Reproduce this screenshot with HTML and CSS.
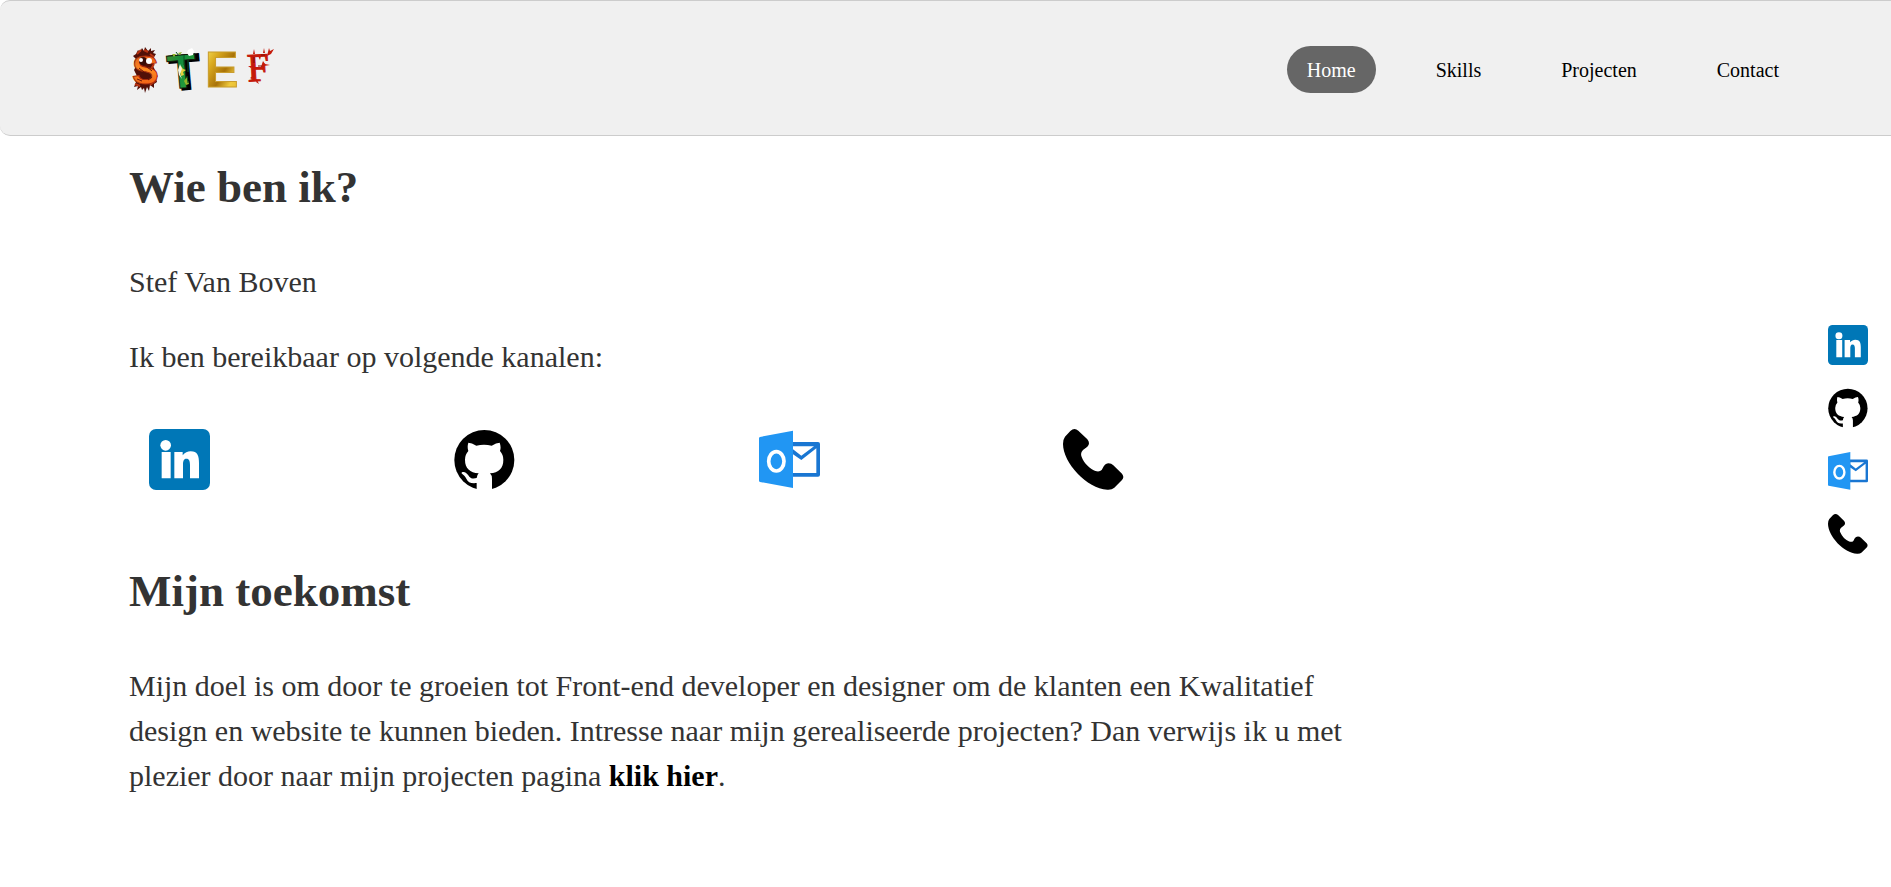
FILE: index.html
```html
<!DOCTYPE html>
<html lang="nl">
<head>
<meta charset="utf-8">
<meta name="viewport" content="width=device-width, initial-scale=1">
<title>Stef Van Boven</title>
<link rel="stylesheet" href="styles.css">
</head>
<body>
<svg class="sprite" aria-hidden="true">
  <symbol id="linkedin" viewBox="0 0 183 183">
    <rect width="183" height="183" rx="21" fill="#0077b7"/>
    <circle cx="50" cy="49" r="16" fill="#fff"/>
    <path fill="#fff" d="M38 69H65V148H38ZM76 69H101V79C107 71 116 67 125 67C146 67 150 81 150 102V148H123V108C123 97 121 89 112 89C104 89 102 97 102 107V148H76Z"/>
  </symbol>
  <symbol id="github" viewBox="0 0 183 183">
    <circle cx="91" cy="93" r="90"/>
    <path fill="#fff" d="M43 41Q53 41 67 50Q90 44 113 50Q127 41 137 41Q142 54 138 66Q148 77 148 92C148 119 134 130 108 133Q114 139 114 149V184H68V162C51 164 42 160 37 149C33 141 29 138 24 134C21 131 24 128 30 129C38 131 42 138 46 143C52 150 61 149 68 147Q69 138 74 133C48 130 33 119 33 92Q33 77 43 66Q39 54 43 41Z"/>
  </symbol>
  <symbol id="outlook" viewBox="0 0 183 183">
    <path fill="#1976d2" d="M98 39H177Q183 39 183 45V137Q183 143 177 143H98Z"/>
    <path fill="#fff" d="M102 52H165L127 80L102 61ZM102 76L127 93L172 58V132H102Z"/>
    <path fill="#2196f3" d="M3 24L102 5V177L3 159Q0 158 0 155V27Q0 25 3 24Z"/>
    <ellipse cx="52" cy="97" rx="23" ry="29" fill="none" stroke="#fff" stroke-width="11"/>
  </symbol>
  <symbol id="phone" viewBox="0 0 183 183">
    <path d="M22 6Q34 -5 46 5L73 31Q83 43 73 53L60 63Q51 71 56 84C64 104 80 119 97 126Q109 130 116 123C121 116 124 103 137 103Q145 103 151 109L177 134Q185 144 177 153L154 176Q146 183 133 182C72 180 0 101 0 45Q0 31 6 23Z"/>
  </symbol>
</svg>

<header class="header">
  <a class="logo" href="#home" aria-label="STEF">
    <svg class="logo-art" viewBox="0 0 144 48" aria-hidden="true">
      <defs>
        <linearGradient id="gold" x1="0" y1="0" x2="1" y2="1">
          <stop offset="0" stop-color="#fff06a"/><stop offset=".3" stop-color="#d9a91f"/>
          <stop offset=".55" stop-color="#a87208"/><stop offset=".75" stop-color="#f0ca3c"/>
          <stop offset="1" stop-color="#e0b32c"/>
        </linearGradient>
        <linearGradient id="green" x1="0" y1="0" x2="1" y2="1">
          <stop offset="0" stop-color="#4f8f2c"/><stop offset=".4" stop-color="#118b3c"/>
          <stop offset="1" stop-color="#3fae3c"/>
        </linearGradient>
        <linearGradient id="fire" x1="0" y1="0" x2="0" y2="1">
          <stop offset="0" stop-color="#d8481c"/><stop offset=".5" stop-color="#ff8a20"/>
          <stop offset="1" stop-color="#e84c10"/>
        </linearGradient>
      </defs>
      <path fill="#521008" d="M4 8L6 4L8 6L10 2L12 5L13 1L16 5L19 2L19 5L23 4L21 7L24 8L22 11L23 15L21 20L23 24L22 27L26 30L24 32L25 36L22 38L22 42L18 39L17 45L15 41L13 47L12 42L10 44L9 41L5 44L6 40L2 41L4 36L2 33L5 30L2 24L4 20L2 16L4 13L1 10Z"/>
      <g fill="none" stroke="#b83210" stroke-width="2"><path d="M5 8l4-4M12 4l4 2M18 8l4 3M4 15l1 8M22 18l-3 5M3 38l5 2M18 39l5-4"/></g>
      <text class="fire-letter" x="0" y="38" fill="url(#fire)" stroke="#a82c0c">S</text>
      <path fill="none" stroke="#6b1408" stroke-width="1" d="M7 22l5 4M14 20l6 5M5 33l5 2M16 34l4-3"/>
      <circle cx="11" cy="15" r="4" fill="#3a0c08"/>
      <circle cx="9" cy="14" r="2" fill="#fff"/><circle cx="17" cy="15" r="3" fill="#fff"/>
      <g transform="rotate(-5 50 24)">
        <text class="comic-letter" x="38" y="43" fill="#000" stroke="#000">T</text>
        <text class="comic-letter comic-face" x="35" y="42" fill="url(#green)" stroke="#10190c">T</text>
      </g>
      <path fill="#fff" d="M56 4L60 2L62 5L61 9L57 10L55 7Z"/>
      <path fill="#92b52a" d="M40 8l4 0-2 3zM46 7l4-1-2 3zM52 35l3-4 2 7-3 1z"/>
      <path fill="#e5cf3e" d="M49 20l2 3 3 1-3 2 1 3-3 1-1-4z"/>
      <path fill="#f0f4e4" d="M48 18l2 5-2 5 2 5-3-4-1-5z"/>
      <path fill="none" stroke="#075522" d="M52 9v10M56 14v12M44 6l3 4M55 30l1 7"/>
      <text class="gold-letter" x="73" y="41" fill="url(#gold)" stroke="#c99c2d">E</text>
      <text class="horror-letter" transform="rotate(-3 126 22)" x="115" y="35" fill="#c51a0a" stroke="#c51a0a">F</text>
      <g fill="#c51a0a">
        <path d="M121 8l1-5 1 5zM131 7l1-5 1 5zM136 6l1-4 1 3 4-2-3 5-4 2z"/>
        <path d="M126 10l2 4 1-4zM133 9l1 4 1-5zM130 18l1-3 2 3 5 1-6 1-1 4-2-3z"/>
        <path d="M119 22l-3-2 4 0zM120 33l-2-1 3-2zM125 34l2 4-3-2z"/>
      </g>
      <path fill="none" stroke="#7c0c04" d="M122 11v6M129 9h4M126 20h4"/>
    </svg>
  </a>
  <nav class="nav" aria-label="Hoofdmenu">
    <a class="nav-link active" href="#home" aria-current="page">Home</a>
    <a class="nav-link" href="#skills">Skills</a>
    <a class="nav-link" href="#projecten">Projecten</a>
    <a class="nav-link" href="#contact">Contact</a>
  </nav>
</header>

<main class="content" id="home">
  <section class="section">
    <h2 class="title">Wie ben ik?</h2>
    <p class="text">Stef Van Boven</p>
    <p class="text">Ik ben bereikbaar op volgende kanalen:</p>
    <div class="channels">
      <a class="channel" href="#linkedin" aria-label="LinkedIn"><svg class="icon"><use href="#linkedin"/></svg></a>
      <a class="channel" href="#github" aria-label="GitHub"><svg class="icon"><use href="#github"/></svg></a>
      <a class="channel" href="#outlook" aria-label="Outlook"><svg class="icon"><use href="#outlook"/></svg></a>
      <a class="channel" href="#phone" aria-label="Telefoon"><svg class="icon"><use href="#phone"/></svg></a>
    </div>
  </section>
  <section class="section">
    <h2 class="title">Mijn toekomst</h2>
    <p class="text">Mijn doel is om door te groeien tot Front-end developer en designer om de klanten een Kwalitatief design en website te kunnen bieden. Intresse naar mijn gerealiseerde projecten? Dan verwijs ik u met plezier door naar mijn projecten pagina <a class="text-link" href="#projecten">klik hier</a>.</p>
  </section>
</main>

<aside class="social" aria-label="Contactkanalen">
  <a class="social-link" href="#linkedin" aria-label="LinkedIn"><svg class="icon"><use href="#linkedin"/></svg></a>
  <a class="social-link" href="#github" aria-label="GitHub"><svg class="icon"><use href="#github"/></svg></a>
  <a class="social-link" href="#outlook" aria-label="Outlook"><svg class="icon"><use href="#outlook"/></svg></a>
  <a class="social-link" href="#phone" aria-label="Telefoon"><svg class="icon"><use href="#phone"/></svg></a>
</aside>
</body>
</html>
```

FILE: styles.css
```css
* { box-sizing: border-box; }

body {
  margin: 0;
  background: #fff;
  color: #333;
  font-family: "Liberation Serif", "Times New Roman", serif;
  font-size: 30px;
  line-height: 45px;
}

.sprite { position: absolute; width: 0; height: 0; }

.header {
  display: flex;
  flex-wrap: wrap;
  align-items: flex-start;
  justify-content: space-between;
  padding: 45px 92px 41px 132px;
  background: #f0f0f0;
  border: 1px solid #ccc;
  border-width: 1px 0;
  border-radius: 10px 0 0 10px;
}

.logo { display: block; }
.logo-art { display: block; width: 144px; height: 48px; overflow: visible; }
.fire-letter { font: bold 40px "Liberation Sans", Arial, sans-serif; stroke-width: 1px; }
.comic-letter { font: bold 48px "Liberation Sans", Arial, sans-serif; stroke-width: 3px; }
.comic-face { stroke-width: 1px; }
.gold-letter { font: bold 50px "Liberation Sans", Arial, sans-serif; stroke-width: 1px; }
.horror-letter { font: 40px "Liberation Serif", "Times New Roman", serif; stroke-width: 1px; }

.nav { display: flex; flex-wrap: wrap; gap: 40px; }

.nav-link {
  padding: 13px 20px 11px;
  border-radius: 25px;
  color: #000;
  font-size: 20px;
  line-height: 23px;
  text-decoration: none;
}

.nav-link.active { background: #666; color: #fff; }

.content {
  max-width: 1348px;
  padding: 17px 0 30px 129px;
}

.title {
  margin: 0 0 38px;
  font-size: 45px;
  line-height: 68px;
}

.text { margin: 0 0 30px; }

.text-link { color: #000; font-weight: bold; text-decoration: none; }

.channels {
  display: grid;
  grid-template-columns: repeat(4, 1fr);
  padding: 20px 0 67px;
}

.channel { display: block; width: 61px; height: 61px; margin-left: 20px; }

.icon { display: block; width: 100%; height: 100%; }

.social {
  position: fixed;
  top: 325px;
  right: 23px;
  display: flex;
  flex-direction: column;
  gap: 23px;
}

.social-link { display: block; width: 40px; height: 40px; }
```
